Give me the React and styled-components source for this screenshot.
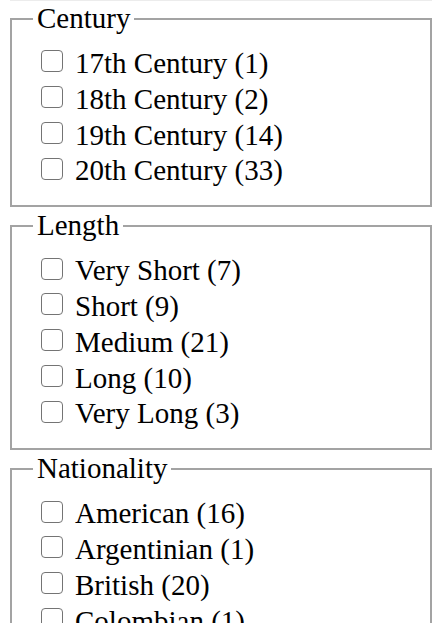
import styled, { createGlobalStyle } from "styled-components";

const GlobalStyle = createGlobalStyle`
  html, body {
    margin: 0;
    padding: 0;
    background: #ffffff;
    font-family: "Liberation Serif", "Times New Roman", serif;
    color: #000000;
  }
`;

const Page = styled.div`
  height: 100vh;
  overflow: hidden;
  padding: 0 7px 0 10px;
  box-sizing: border-box;
`;

const TopEdge = styled.div`
  height: 1px;
  margin-bottom: 1px;
  background: #ececec;
`;

const FilterList = styled.div`
  display: flex;
  flex-direction: column;
  gap: 2px;
`;

const Group = styled.fieldset`
  margin: 0;
  padding: 11px 12px 16px 21px;
  border: 2px solid #a3a3a3;
  min-width: 0;
`;

const Legend = styled.legend`
  padding: 0 4px;
  font-size: 29px;
  line-height: normal;
`;

const Option = styled.label`
  display: flex;
  align-items: center;
  gap: 12px;
  height: 35.8px;
  padding-left: 8px;
  font-size: 29px;
  line-height: 35.8px;
  white-space: nowrap;
`;

const Box = styled.input.attrs({ type: "checkbox" })`
  appearance: none;
  margin: 0 0 5px 0;
  width: 22px;
  height: 22px;
  flex: none;
  box-sizing: border-box;
  border: 1.6px solid #747474;
  border-radius: 4px;
  background: #ffffff;
`;

const groups = [
  {
    title: "Century",
    items: [
      ["17th Century", 1],
      ["18th Century", 2],
      ["19th Century", 14],
      ["20th Century", 33],
    ],
  },
  {
    title: "Length",
    items: [
      ["Very Short", 7],
      ["Short", 9],
      ["Medium", 21],
      ["Long", 10],
      ["Very Long", 3],
    ],
  },
  {
    title: "Nationality",
    items: [
      ["American", 16],
      ["Argentinian", 1],
      ["British", 20],
      ["Colombian", 1],
      ["French", 8],
      ["German", 4],
    ],
  },
];

export default function App() {
  return (
    <>
      <GlobalStyle />
      <Page>
        <TopEdge />
        <FilterList>
          {groups.map((g) => (
            <Group key={g.title}>
              <Legend>{g.title}</Legend>
              {g.items.map(([name, count]) => (
                <Option key={name}>
                  <Box />
                  <span>
                    {name} ({count})
                  </span>
                </Option>
              ))}
            </Group>
          ))}
        </FilterList>
      </Page>
    </>
  );
}
